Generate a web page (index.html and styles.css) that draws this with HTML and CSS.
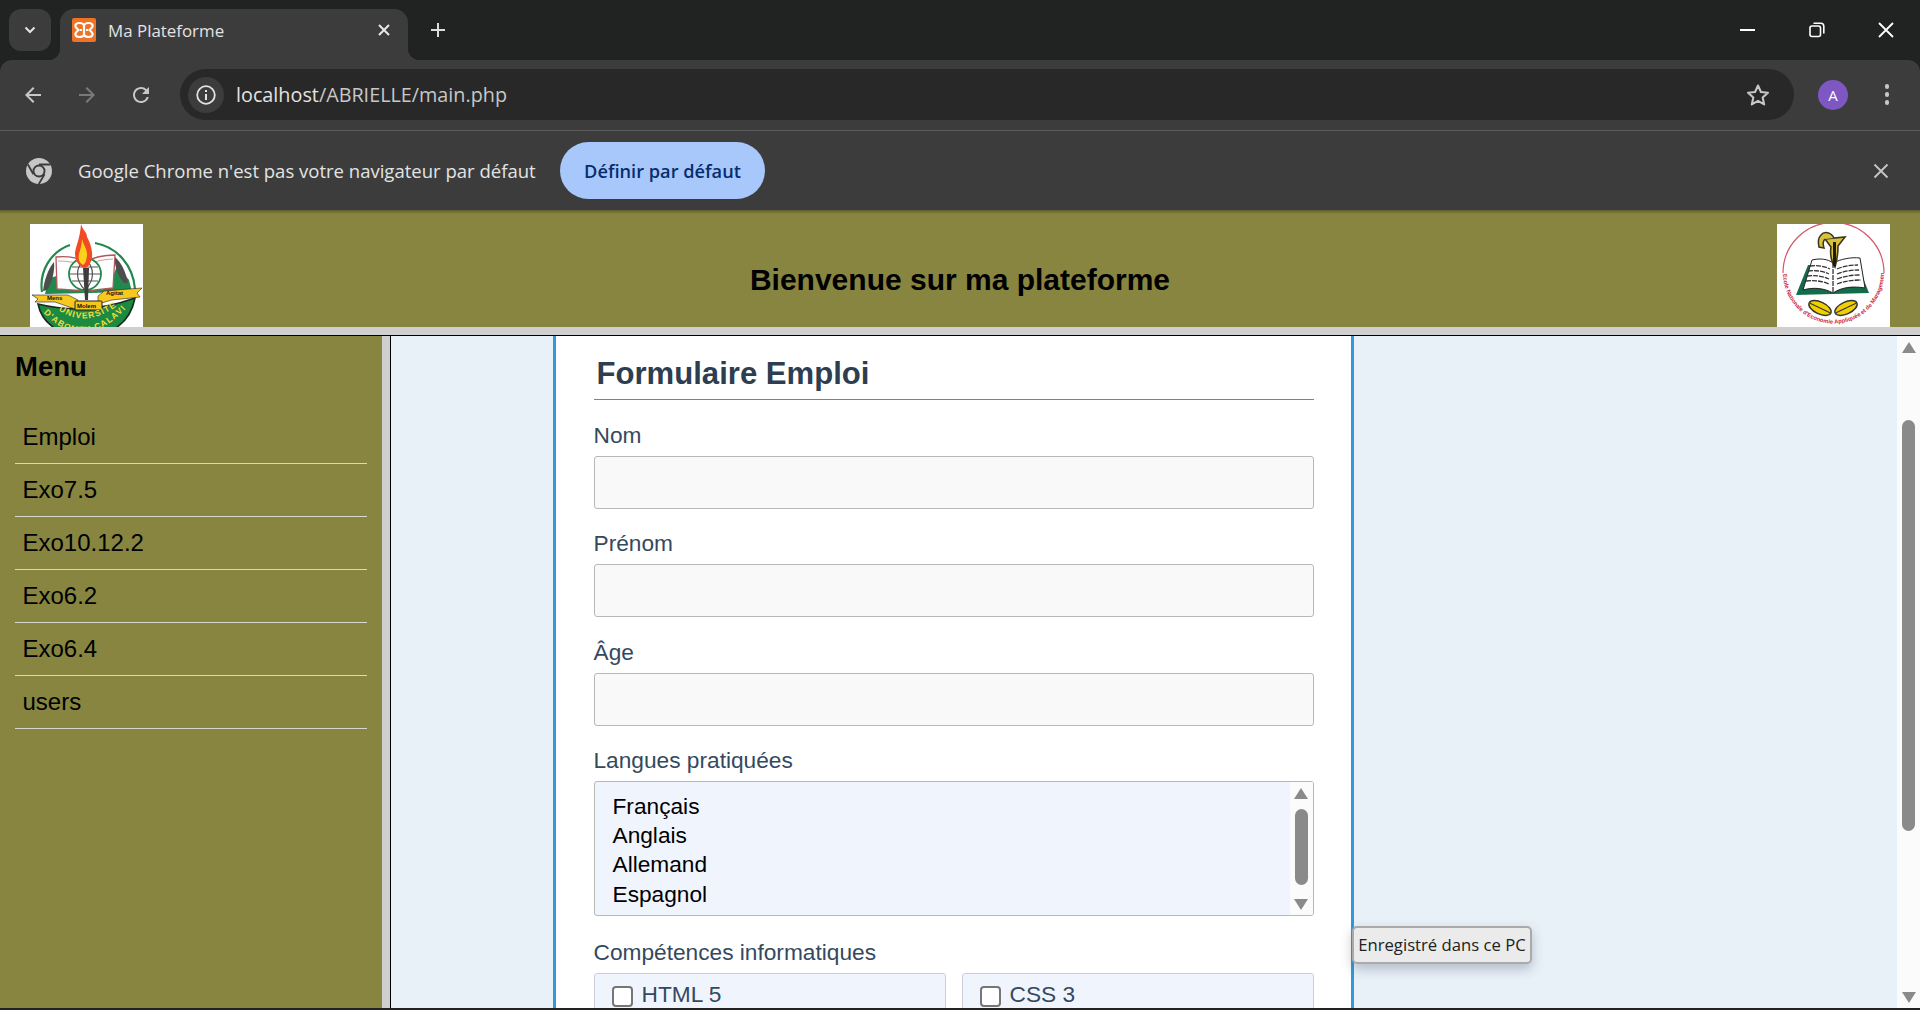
FILE: index.html
```html
<!DOCTYPE html>
<html lang="fr">
<head>
<meta charset="utf-8">
<title>Ma Plateforme</title>
<link rel="stylesheet" href="styles.css">
</head>
<body>
<div class="browser">
  <div class="tabstrip">
    <div class="tabsearch"><svg width="14" height="14" viewBox="0 0 14 14"><path d="M2.500 4.500 7 9l4.500-4.500" fill="none" stroke="#e3e3e3" stroke-width="2"/></svg></div>
    <div class="tab">
      <svg class="favicon" width="24" height="24" viewBox="0 0 24 24"><rect width="24" height="24" rx="2" fill="#ee7326"/><path d="M12 7C11 5 9 5 7 5 4 5 3 7 3.500 8.500 4 10 5.500 11 6.500 12 5.500 13 4 14 3.500 15.500 3 17 4 19 7 19c2 0 4 0 5-2 1 2 3 2 5 2 3 0 4-2 3.500-3.500C20 14 18.500 13 17.500 12c1-1 2.500-2 3-3.500C21 7 20 5 17 5c-2 0-4 0-5 2z" fill="none" stroke="#fff" stroke-width="2.200"/><path d="M12 7v10M8 12h2M14 12h2" stroke="#fff" stroke-width="2.200"/></svg>
      <span class="tabtitle">Ma Plateforme</span>
      <svg class="tabclose" width="14" height="14" viewBox="0 0 14 14"><path d="M2 2l10 10M12 2 2 12" stroke="#e8e8e8" stroke-width="2"/></svg>
    </div>
    <svg class="newtab" width="18" height="18" viewBox="0 0 18 18"><path d="M9 2v14M2 9h14" stroke="#dcdcdc" stroke-width="2"/></svg>
    <div class="winctl">
      <div class="winbtn"><svg width="16" height="16" viewBox="0 0 16 16"><path d="M0 8h15" stroke="#fff" stroke-width="2"/></svg></div>
      <div class="winbtn"><svg width="16" height="16" viewBox="0 0 16 16"><rect x="1" y="4" width="10.500" height="10.500" rx="2" fill="none" stroke="#fff" stroke-width="1.600"/><path d="M4.500 1.200h7.300c1.700 0 3 1.300 3 3v7.300" fill="none" stroke="#fff" stroke-width="1.600"/></svg></div>
      <div class="winbtn"><svg width="16" height="16" viewBox="0 0 16 16"><path d="M1 1l14 14M15 1 1 15" stroke="#fff" stroke-width="1.800"/></svg></div>
    </div>
  </div>
  <div class="toolbar">
    <div class="navbtn"><svg width="24" height="24" viewBox="0 0 24 24"><path d="M20 11H7.830l5.590-5.590L12 4l-8 8 8 8 1.410-1.410L7.830 13H20v-2z" fill="#c7c7c7"/></svg></div>
    <div class="navbtn"><svg width="24" height="24" viewBox="0 0 24 24"><path d="M12 4l-1.410 1.410L16.170 11H4v2h12.170l-5.580 5.590L12 20l8-8z" fill="#7a7a7a"/></svg></div>
    <div class="navbtn"><svg width="24" height="24" viewBox="0 0 24 24"><path d="M17.650 6.350A7.958 7.958 0 0 0 12 4c-4.420 0-7.990 3.580-7.990 8s3.570 8 7.990 8c3.730 0 6.840-2.550 7.730-6h-2.080A5.990 5.990 0 0 1 12 18c-3.310 0-6-2.690-6-6s2.690-6 6-6c1.660 0 3.140.69 4.220 1.780L13 11h7V4l-2.350 2.350z" fill="#c7c7c7"/></svg></div>
    <div class="omnibox">
      <div class="siteinfo"><svg width="22" height="22" viewBox="0 0 22 22"><circle cx="11" cy="11" r="8.800" fill="none" stroke="#e3e3e3" stroke-width="1.800"/><path d="M11 10v6M11 6v2" stroke="#e3e3e3" stroke-width="2"/></svg></div>
      <span class="url">localhost<span class="urldim">/ABRIELLE/main.php</span></span>
      <svg class="star" width="26" height="26" viewBox="0 0 24 24"><path d="M12 3.200l2.700 6 6.500.7-4.900 4.400 1.400 6.400-5.700-3.300-5.700 3.300 1.400-6.400-4.900-4.400 6.500-.7z" fill="none" stroke="#c7c7c7" stroke-width="1.900" stroke-linejoin="round"/></svg>
    </div>
    <div class="avatar">A</div>
    <div class="dots"><span class="dot"></span><span class="dot"></span><span class="dot"></span></div>
  </div>
  <div class="infobar">
    <svg class="chromeicon" width="26" height="26" viewBox="0 0 26 26"><circle cx="13" cy="13" r="13" fill="#c7c7c7"/><circle cx="13" cy="13" r="6.500" fill="#3c3c3c"/><circle cx="13" cy="13" r="4.600" fill="#c7c7c7"/><path d="M13 6.500h11.500M7.400 16.300 1.800 6.300M18.600 16.300 12.800 26" stroke="#3c3c3c" stroke-width="1.800" fill="none"/></svg>
    <span class="infotext">Google Chrome n'est pas votre navigateur par défaut</span>
    <div class="infobtn">Définir par défaut</div>
    <svg class="infoclose" width="16" height="16" viewBox="0 0 16 16"><path d="M1.500 1.500l13 13M14.500 1.500l-13 13" stroke="#c7c7c7" stroke-width="1.800"/></svg>
  </div>
</div>

<header class="siteheader">
  <svg class="logo" width="113" height="103" viewBox="0 0 113 103">
    <rect width="113" height="103" fill="#fff"/>
    <path d="M12 68C9 48 20 28 40 21M65 19c22 4 38 22 40 46" fill="none" stroke="#1f8a4c" stroke-width="2.200"/>
    <path d="M15 70l4-16 8-2 29 14 27-14 4-10 12 14 3 12z" fill="#1f8a4c"/>
    <path d="M13 67c1-10 5-22 11-29 1 9-2 21-7 28z" fill="#4d4d4d"/>
    <path d="M98 59c-2-10-6-20-13-26-1 9 3 19 9 26z" fill="#4d4d4d"/>
    <path d="M26 33c10-1 20 0 29 5 9-5 19-7 30-7l-2 33-27 3-29-2z" fill="#fff" stroke="#b5565c" stroke-width="1.300"/>
    <path d="M28 37c9 0 18 1 26 5M83 35c-9 0-18 2-27 7" fill="none" stroke="#d9a0a4" stroke-width="1.200"/>
    <circle cx="55" cy="50" r="16" fill="#fff" stroke="#1f8a4c" stroke-width="1.800"/>
    <path d="M40 50h31M42 43h26M42 57h26M55 34c-10 10-10 22 0 32M55 34c10 10 10 22 0 32" fill="none" stroke="#555" stroke-width="1.200"/>
    <path d="M53 44h6l-1 32h-3z" fill="#3d3d3d"/>
    <path d="M51 0c2 7 6 8 6 13 2 3 6 13 5 20-1 7-4 10-7 11-6-1-10-7-10-15 1-8 5-14 6-29z" fill="#f04b23"/>
    <path d="M52 15c2 7 5 10 5 15 0 6-2 10-4 11-4-2-5-6-4-11 1-4 3-9 3-15z" fill="#fbd11b"/>
    <path d="M8 80Q56 92 105 74C100 100 80 112 56 112 30 112 12 100 8 80z" fill="#1d8a42" stroke="#1b2a1f" stroke-width="1.600"/>
    <path d="M2 71l36 0 10 5-3 9-20-7-20 0 3-3zM112 64l-5 5 3 4-28 3-14 4 0-8 6-5z" fill="#f8c820" stroke="#222" stroke-width=".6"/>
    <rect x="45" y="77" width="27" height="9" rx="1" fill="#f4c61e" stroke="#222" stroke-width="1"/>
    <text class="logomotto" x="17" y="76">Mens</text>
    <text class="logomotto" x="47" y="84">Molem</text>
    <text class="logomotto" x="76" y="71">Agitat</text>
    <defs><path id="arc1" d="M27 85Q55 106 90 80"/><path id="arc2" d="M12 87Q54 134 102 78"/></defs>
    <text class="logouniv"><textPath href="#arc1" startOffset="2">UNIVERSITE</textPath></text>
    <text class="logouniv"><textPath href="#arc2" startOffset="2">D'ABOMEY-CALAVI</textPath></text>
  </svg>
  <h1 class="sitetitle">Bienvenue sur ma plateforme</h1>
  <svg class="logo" width="113" height="103" viewBox="0 0 113 103">
    <rect width="113" height="103" fill="#fff"/>
    <path d="M6 49A50.500 50.500 0 0 1 107 49" fill="none" stroke="#d0596a" stroke-width="1.200"/>
    <path d="M31 41 19 71l37-1 36-1-11-28z" fill="#146b4a"/>
    <path d="M35 36c8-2 16-1 21 3 8-4 18-6 27-5l5 30c-12-2-23-1-32 5-9-5-20-6-30-3z" fill="#fff" stroke="#222" stroke-width="1"/>
    <path d="M56 39v29M33 42c7-1 14 0 20 3M31 47c7-1 15 0 21 3M30 52c8-1 15 0 22 3M29 57c8-1 16 0 23 3M60 45c7-3 14-4 21-4M60 50c7-3 15-4 22-4M60 55c8-3 15-4 23-4M60 60c8-3 16-4 24-4" fill="none" stroke="#333" stroke-width="1.300" stroke-dasharray="5 1"/>
    <path d="M58 43c-4-6-5-13-4-20l-6-8 20-2-7 9c0 7-1 14-3 21z" fill="#d9c23a" stroke="#3a3520" stroke-width="1.600"/>
    <path d="M57 14C54 8 47 7 44 11c-3 3-3 8-2 12l5 1c-1-3-1-7 1-9" fill="#d9c23a" stroke="#3a3520" stroke-width="1.500"/>
    <path d="M57.500 18v24" stroke="#1e1c10" stroke-width="3"/>
    <g transform="rotate(25 43 84)"><ellipse cx="43" cy="84" rx="12" ry="6" fill="#f1d000" stroke="#333" stroke-width="1.400"/><path d="M32 84h22" stroke="#333" stroke-width="1.100"/></g>
    <g transform="rotate(-25 69 84)"><ellipse cx="69" cy="84" rx="12" ry="6" fill="#f1d000" stroke="#333" stroke-width="1.400"/><path d="M58 84h22" stroke="#333" stroke-width="1.100"/></g>
    <defs><path id="arc3" d="M6 49A50.500 50.500 0 0 0 107 49"/></defs>
    <text class="logoenea"><textPath href="#arc3" startOffset="1">Ecole Nationale d'Economie Appliquée et de Management</textPath></text>
  </svg>
</header>
<div class="divider"></div>

<div class="layout">
  <aside class="sidebar">
    <h2 class="menutitle">Menu</h2>
    <ul class="menu">
      <li class="menuitem">Emploi</li>
      <li class="menuitem">Exo7.5</li>
      <li class="menuitem">Exo10.12.2</li>
      <li class="menuitem">Exo6.2</li>
      <li class="menuitem">Exo6.4</li>
      <li class="menuitem">users</li>
    </ul>
  </aside>
  <main class="content">
    <form class="card">
      <h2 class="formtitle">Formulaire Emploi</h2>
      <div class="field">
        <label class="label">Nom</label>
        <input class="input" type="text">
      </div>
      <div class="field">
        <label class="label">Prénom</label>
        <input class="input" type="text">
      </div>
      <div class="field">
        <label class="label">Âge</label>
        <input class="input" type="text">
      </div>
      <div class="field fieldwide">
        <label class="label">Langues pratiquées</label>
        <div class="listbox">
          <ul class="options">
            <li>Français</li>
            <li>Anglais</li>
            <li>Allemand</li>
            <li>Espagnol</li>
          </ul>
          <div class="scroll scrollsmall">
            <svg class="arrow" width="14" height="11" viewBox="0 0 14 11"><path d="M7 0l7 11H0z" fill="#8a8a8a"/></svg>
            <div class="thumb thumbsmall"></div>
            <svg class="arrow" width="14" height="11" viewBox="0 0 14 11"><path d="M0 0h14L7 11z" fill="#8a8a8a"/></svg>
          </div>
        </div>
      </div>
      <div class="field">
        <label class="label">Compétences informatiques</label>
        <div class="skills">
          <div class="skill"><input class="check" type="checkbox"><span>HTML 5</span></div>
          <div class="skill"><input class="check" type="checkbox"><span>CSS 3</span></div>
        </div>
      </div>
    </form>
  </main>
  <div class="scroll scrollmain">
    <svg class="arrow" width="14" height="11" viewBox="0 0 14 11"><path d="M7 0l7 11H0z" fill="#8a8a8a"/></svg>
    <div class="thumb thumbmain"></div>
    <svg class="arrow arrowend" width="14" height="11" viewBox="0 0 14 11"><path d="M0 0h14L7 11z" fill="#8a8a8a"/></svg>
  </div>
  <div class="tooltip">Enregistré dans ce PC</div>
</div>
<div class="taskedge"></div>
</body>
</html>
```

FILE: styles.css
```css
* { box-sizing: border-box; }
html, body { margin: 0; height: 1010px; overflow: hidden; }
body {
  display: flex;
  flex-direction: column;
  background: #e8f0f8;
  font-family: "Liberation Sans", Arial, sans-serif;
}

/* Browser chrome */
.browser { flex: none; font-family: "Open Sans", "Noto Sans", sans-serif; background: #202322; }
.tabstrip { height: 60px; display: flex; align-items: flex-start; padding: 9px 0 0 9px; background: #202322; }
.tabsearch { width: 42px; height: 42px; border-radius: 12px; background: #3c3c3c; display: flex; align-items: center; justify-content: center; }
.tab {
  position: relative;
  width: 348px; height: 51px; margin-left: 9px;
  background: #3c3c3c;
  border-radius: 14px 14px 0 0;
  display: flex; align-items: center;
  padding: 0 17px 9px 12px;
}
.tab::before, .tab::after { content: ""; position: absolute; bottom: 0; width: 12px; height: 12px; }
.tab::before { left: -12px; background: radial-gradient(circle at 0 0, transparent 12px, #3c3c3c 12.500px); }
.tab::after { right: -12px; background: radial-gradient(circle at 100% 0, transparent 12px, #3c3c3c 12.500px); }
.favicon { flex: none; }
.tabtitle { margin-left: 12px; flex: 1; font-size: 16.900px; color: #e3e3e3; }
.tabclose { flex: none; }
.newtab { margin: 12px 0 0 21px; flex: none; }
.winctl { margin-left: auto; margin-top: -9px; display: flex; }
.winbtn { width: 69px; height: 60px; display: flex; align-items: center; justify-content: center; }

.toolbar {
  height: 71px;
  background: #3c3c3c;
  border-radius: 12px 12px 0 0;
  border-bottom: 1px solid #5a5a5a;
  display: flex; align-items: center;
  padding: 0 18px 1px 15px;
}
.navbtn { width: 36px; height: 36px; margin-right: 18px; display: flex; align-items: center; justify-content: center; flex: none; }
.omnibox {
  flex: 1; height: 51px; margin-left: 3px; margin-right: 24px;
  border-radius: 26px; background: #282828;
  display: flex; align-items: center;
  padding: 0 23px 0 8px;
}
.siteinfo { width: 36px; height: 36px; border-radius: 50%; background: #3c3c3c; display: flex; align-items: center; justify-content: center; flex: none; }
.url { margin-left: 12px; flex: 1; font-size: 19.800px; color: #e3e3e3; }
.urldim { color: #c7c7c7; }
.star { flex: none; }
.avatar { width: 30px; height: 30px; border-radius: 50%; background: #7e57c2; color: #fff; font-size: 15px; display: flex; align-items: center; justify-content: center; flex: none; }
.dots { width: 30px; margin-left: 24px; display: flex; flex-direction: column; align-items: center; gap: 3.500px; flex: none; }
.dot { width: 4.500px; height: 4.500px; border-radius: 50%; background: #c7c7c7; }

.infobar {
  height: 79px; background: #3c3c3c;
  display: flex; align-items: center;
  padding: 0 31px 0 26px;
}
.chromeicon { flex: none; }
.infotext { margin-left: 26px; font-size: 18.520px; color: #e3e3e3; white-space: nowrap; width: 456px; }
.infobtn {
  margin-left: 26px; width: 205px; height: 57px; border-radius: 29px;
  background: #a8c7fa; color: #062e6f;
  font-size: 18.200px; font-weight: 600;
  display: flex; align-items: center; justify-content: center;
}
.infoclose { margin-left: auto; flex: none; }

/* Page header */
.siteheader {
  height: 117px; flex: none;
  background: #87853f linear-gradient(#5f5e30, #87853f 4px);
  display: flex; align-items: flex-end; justify-content: space-between;
  padding: 0 30px;
}
.logo { display: block; flex: none; }
.logomotto { font: bold 6px "Liberation Sans", sans-serif; fill: #111; }
.logouniv { font: bold 8.500px "Liberation Sans", sans-serif; fill: #f2dc3c; letter-spacing: 1.200px; }
.logoenea { font: bold 5.800px "Liberation Sans", sans-serif; fill: #c8283e; }
.sitetitle { margin: 0 0 29px; font-size: 30px; line-height: 36px; font-weight: bold; color: #000; }
.divider { height: 9px; flex: none; background: #cfcfcf; border-bottom: 1px solid #000; }

/* Body layout */
.layout { position: relative; flex: 1; min-height: 0; display: flex; overflow: hidden; }
.sidebar {
  width: 391px; flex: none;
  background: #87853f;
  border-right: 9px solid #cfcfcf;
  padding: 14px 15px 0;
  position: relative;
}
.sidebar::after { content: ""; position: absolute; top: 0; bottom: 0; right: -9px; width: 1px; background: #000; }
.menutitle { margin: 0 0 27px 0; font-size: 27.500px; line-height: 34px; font-weight: bold; color: #000; }
.menu { list-style: none; margin: 0; padding: 0; width: 352px; }
.menuitem {
  height: 53px; padding: 0 0 0 7.500px;
  border-bottom: 1px solid #d8d8c8;
  display: flex; align-items: center;
  font-size: 24px; color: #000;
}

.content { flex: 1; min-width: 0; background: #e8f0f8; }
.card {
  width: 801px; margin-left: 162px;
  background: #fff;
  border-left: 3px solid #3498db;
  border-right: 3px solid #3498db;
  padding: 0 37.500px 0 37.500px;
  height: 720px;
}
.formtitle {
  margin: 0 0 22.500px; padding: 18px 0 3px 3px;
  height: 64px;
  border-bottom: 1px solid #3498db;
  font-size: 31.100px; line-height: 40px; font-weight: bold; color: #2c3e50;
}
.field { margin-bottom: 22.500px; }
.fieldwide { margin-bottom: 23.500px; }
.label { display: block; height: 26px; line-height: 26px; margin-bottom: 7px; font-size: 22.700px; color: #34495e; position: relative; top: -1px; }
.input {
  display: block; width: 100%; height: 53px;
  border: 1px solid #b8b8b8; border-radius: 3px;
  background: #f9f9f9;
}
.listbox {
  height: 135px; display: flex;
  border: 1px solid #b8b8b8; border-radius: 3px;
  background: #f0f5fd;
  overflow: hidden;
}
.options { flex: 1; list-style: none; margin: 0; padding: 10px 0 0 18px; font-size: 22.700px; line-height: 29.200px; color: #000; }
.scroll { display: flex; flex-direction: column; align-items: center; flex: none; background: #fbfbfb; }
.scrollsmall { width: 23px; padding-top: 6px; }
.scrollmain { width: 23px; padding-top: 6px; }
.arrow { flex: none; }
.arrowend { margin-top: auto; margin-bottom: 5px; }
.thumb { width: 13px; background: #8a8a8a; border-radius: 7px; }
.thumbsmall { height: 76px; margin: 10px 0 14px; }
.thumbmain { height: 411px; margin-top: 67px; }
.skills { display: grid; grid-template-columns: 352px 352px; gap: 16px; }
.skill {
  height: 60px; display: flex; align-items: flex-start; gap: 9px;
  border: 1px solid #ccd; border-radius: 3px;
  background: #f0f5fd;
  padding: 7px 0 0 17px;
  font-size: 22.700px; line-height: 26px; color: #34495e;
}
.check {
  appearance: none; flex: none;
  width: 21px; height: 21px; margin: 5px 0 0;
  border: 2px solid #767676; border-radius: 4px; background: #fff;
}
.tooltip {
  position: absolute; left: 1352px; top: 590px;
  width: 180px; height: 38px;
  background: #ebebeb;
  border: 2px solid #aaa; border-radius: 5px;
  box-shadow: 0 5px 12px rgba(60, 70, 90, .3);
  font-family: "Open Sans", "Noto Sans", sans-serif;
  font-size: 16.700px; line-height: 34px; text-align: center; color: #222;
  white-space: nowrap;
}
.taskedge { height: 2px; flex: none; background: #202322; }
```
